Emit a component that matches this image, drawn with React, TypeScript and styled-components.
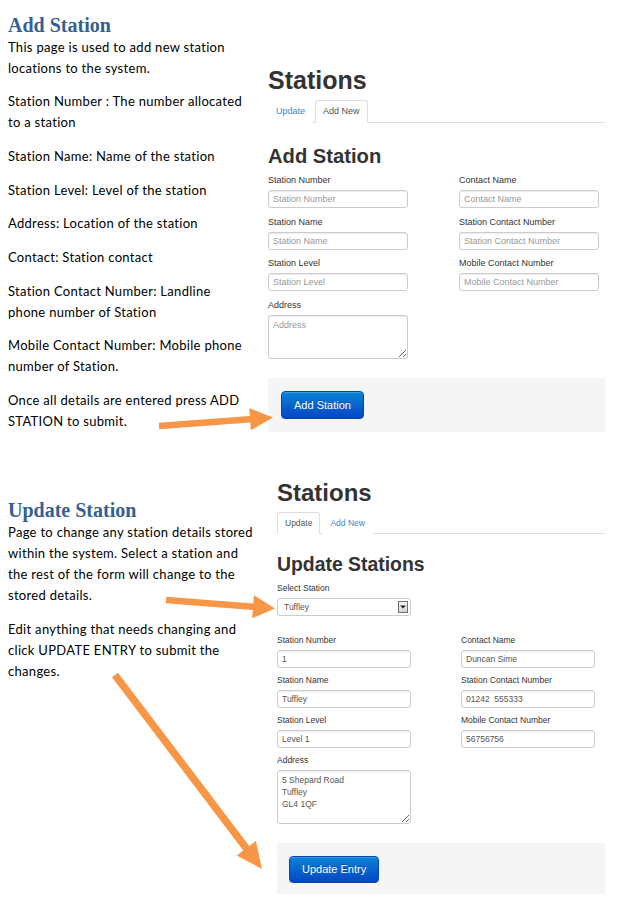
import React from 'react';
import styled, { createGlobalStyle } from 'styled-components';

const GlobalStyle = createGlobalStyle`
  html, body { margin: 0; padding: 0; background: #ffffff; }
  body { font-family: 'Lato', 'Liberation Sans', sans-serif; }
  * { box-sizing: border-box; }
`;

type Shot = {
  leftW: number;
  width: number;
  padTop: number;
  h1: number;
  h1Lh: number;
  tabsMt: number;
  tabH: number;
  tabFs: number;
  h2: number;
  h2Lh: number;
  h2Mt: number;
  h2Mb: number;
  fs: number;
  lblLh: number;
  lblGap: number;
  inH: number;
  inW: number;
  colW: number;
  rowGap: number;
  taH: number;
  actMt: number;
  actPadT: number;
  actPadB: number;
  actPadL: number;
  btnH: number;
  btnPadX: number;
};

const shotA: Shot = {
  leftW: 268,
  width: 337,
  padTop: 66.6,
  h1: 25,
  h1Lh: 27.5,
  tabsMt: 5.9,
  tabH: 23,
  tabFs: 9,
  h2: 20.2,
  h2Lh: 22,
  h2Mt: 22,
  h2Mb: 8.5,
  fs: 9,
  lblLh: 11,
  lblGap: 4,
  inH: 18,
  inW: 140,
  colW: 191,
  rowGap: 8.5,
  taH: 44,
  actMt: 19,
  actPadT: 13,
  actPadB: 13,
  actPadL: 13,
  btnH: 28,
  btnPadX: 12,
};

const shotB: Shot = {
  leftW: 277,
  width: 328,
  padTop: 20.6,
  h1: 24,
  h1Lh: 26.4,
  tabsMt: 5,
  tabH: 22,
  tabFs: 8.5,
  h2: 19.4,
  h2Lh: 22,
  h2Mt: 19,
  h2Mb: 8.5,
  fs: 8.5,
  lblLh: 11,
  lblGap: 4,
  inH: 18,
  inW: 134,
  colW: 184,
  rowGap: 7,
  taH: 54,
  actMt: 18.5,
  actPadT: 13,
  actPadB: 11,
  actPadL: 12,
  btnH: 27,
  btnPadX: 12,
};

const Page = styled.div`
  position: relative;
  width: 621px;
  min-height: 911px;
  overflow: hidden;
`;

const Section = styled.section<{ $leftW: number; $mt: number }>`
  display: grid;
  grid-template-columns: ${(p) => p.$leftW}px 1fr;
  align-items: start;
  margin-top: ${(p) => p.$mt}px;
`;

const TextCol = styled.div<{ $pt: number }>`
  padding: ${(p) => p.$pt}px 0 0 8px;
  color: #000000;
  font-family: 'Lato', 'Liberation Sans', sans-serif;
  font-size: 13px;
  letter-spacing: 0.3px;
`;

const DocHeading = styled.h2<{ $mb: number }>`
  margin: 0 0 ${(p) => p.$mb}px;
  font-family: 'Liberation Serif', 'Times New Roman', serif;
  font-weight: 700;
  font-size: 20px;
  line-height: 24px;
  letter-spacing: 0;
  color: #365f91;
`;

const Para = styled.p`
  margin: 0 0 12.7px;
  line-height: 21px;
  white-space: nowrap;
  &:last-child { margin-bottom: 0; }
`;

const Panel = styled.div<{ $c: Shot }>`
  width: ${(p) => p.$c.width}px;
  padding-top: ${(p) => p.$c.padTop}px;
  font-family: 'Liberation Sans', Arial, Helvetica, sans-serif;
  color: #333333;
`;

const Title = styled.h1<{ $c: Shot }>`
  margin: 0;
  font-size: ${(p) => p.$c.h1}px;
  line-height: ${(p) => p.$c.h1Lh}px;
  font-weight: 700;
  color: #333333;
`;

const Tabs = styled.div<{ $c: Shot }>`
  display: flex;
  margin-top: ${(p) => p.$c.tabsMt}px;
  border-bottom: 1px solid #dddddd;
`;

const Tab = styled.span<{ $c: Shot; $active?: boolean }>`
  height: ${(p) => p.$c.tabH}px;
  line-height: ${(p) => p.$c.tabH - 2}px;
  padding: 0 7px;
  margin: 0 2px -1px 0;
  border: 1px solid ${(p) => (p.$active ? '#dddddd' : 'transparent')};
  border-bottom-color: transparent;
  border-radius: 3px 3px 0 0;
  background: #ffffff;
  font-size: ${(p) => p.$c.tabFs}px;
  color: ${(p) => (p.$active ? '#555555' : '#3a87cf')};
`;

const FormTitle = styled.h2<{ $c: Shot }>`
  margin: ${(p) => p.$c.h2Mt}px 0 ${(p) => p.$c.h2Mb}px;
  font-size: ${(p) => p.$c.h2}px;
  line-height: ${(p) => p.$c.h2Lh}px;
  font-weight: 700;
  color: #333333;
`;

const FormGrid = styled.div<{ $c: Shot }>`
  display: grid;
  grid-template-columns: ${(p) => p.$c.colW}px 1fr;
  row-gap: ${(p) => p.$c.rowGap}px;
`;

const Group = styled.div<{ $mb?: number }>`
  display: flex;
  flex-direction: column;
  align-items: flex-start;
  margin-bottom: ${(p) => p.$mb ?? 0}px;
`;

const Label = styled.label<{ $c: Shot }>`
  display: block;
  font-size: ${(p) => p.$c.fs}px;
  line-height: ${(p) => p.$c.lblLh}px;
  margin-bottom: ${(p) => p.$c.lblGap}px;
  color: #333333;
`;

const Input = styled.input<{ $c: Shot }>`
  display: block;
  width: ${(p) => p.$c.inW}px;
  height: ${(p) => p.$c.inH}px;
  margin: 0;
  padding: 0 4px;
  border: 1px solid #cccccc;
  border-radius: 3px;
  box-shadow: inset 0 1px 1px rgba(0, 0, 0, 0.075);
  background: #ffffff;
  font-family: 'Liberation Sans', Arial, sans-serif;
  font-size: ${(p) => p.$c.fs}px;
  color: #555555;
  outline: none;
  &::placeholder { color: #999999; opacity: 1; }
`;

const TextArea = styled.textarea<{ $c: Shot }>`
  display: block;
  width: ${(p) => p.$c.inW}px;
  height: ${(p) => p.$c.taH}px;
  margin: 0;
  padding: 3px 4px;
  border: 1px solid #cccccc;
  border-radius: 3px;
  box-shadow: inset 0 1px 1px rgba(0, 0, 0, 0.075);
  background: #ffffff;
  font-family: 'Liberation Sans', Arial, sans-serif;
  font-size: ${(p) => p.$c.fs}px;
  line-height: 12px;
  color: #555555;
  resize: vertical;
  outline: none;
  &::placeholder { color: #999999; opacity: 1; }
`;

const SelectBox = styled.div<{ $c: Shot }>`
  display: flex;
  align-items: center;
  justify-content: space-between;
  width: ${(p) => p.$c.inW}px;
  height: ${(p) => p.$c.inH}px;
  padding: 0 2px 0 6px;
  border: 1px solid #cccccc;
  border-radius: 3px;
  background: #ffffff;
  font-size: ${(p) => p.$c.fs}px;
  color: #555555;
`;

const DropButton = styled.span`
  display: flex;
  align-items: center;
  justify-content: center;
  width: 10px;
  height: 12px;
  border: 1px solid #707070;
  background: linear-gradient(#f4f4f4, #d6d6d6);
`;

const Actions = styled.div<{ $c: Shot }>`
  margin-top: ${(p) => p.$c.actMt}px;
  padding: ${(p) => p.$c.actPadT}px 0 ${(p) => p.$c.actPadB}px ${(p) => p.$c.actPadL}px;
  background: #f5f5f5;
`;

const PrimaryButton = styled.button<{ $c: Shot }>`
  display: block;
  height: ${(p) => p.$c.btnH}px;
  padding: 0 ${(p) => p.$c.btnPadX}px;
  border: 1px solid #0645b0;
  border-radius: 4px;
  background: linear-gradient(to bottom, #0a84d6, #0446c4);
  color: #ffffff;
  font-family: 'Liberation Sans', Arial, sans-serif;
  font-size: 11px;
  text-shadow: 0 -1px 0 rgba(0, 0, 0, 0.25);
  box-shadow: inset 0 1px 0 rgba(255, 255, 255, 0.2);
`;

const Overlay = styled.svg`
  position: absolute;
  top: 0;
  left: 0;
  pointer-events: none;
`;

type Arrow = { x1: number; y1: number; x2: number; y2: number; shaft: number; headLen: number; headW: number };

const arrows: Arrow[] = [
  { x1: 159, y1: 426, x2: 273, y2: 417.5, shaft: 6.5, headLen: 23, headW: 22 },
  { x1: 166, y1: 600, x2: 275, y2: 608.5, shaft: 6.5, headLen: 22, headW: 23 },
  { x1: 115, y1: 675, x2: 262, y2: 869, shaft: 7.5, headLen: 26, headW: 24 },
];

function arrowPoints(a: Arrow): string {
  const dx = a.x2 - a.x1;
  const dy = a.y2 - a.y1;
  const len = Math.hypot(dx, dy);
  const ux = dx / len;
  const uy = dy / len;
  const px = -uy;
  const py = ux;
  const bx = a.x2 - ux * a.headLen;
  const by = a.y2 - uy * a.headLen;
  const s = a.shaft / 2;
  const h = a.headW / 2;
  const pts: [number, number][] = [
    [a.x1 + px * s, a.y1 + py * s],
    [bx + px * s, by + py * s],
    [bx + px * h, by + py * h],
    [a.x2, a.y2],
    [bx - px * h, by - py * h],
    [bx - px * s, by - py * s],
    [a.x1 - px * s, a.y1 - py * s],
  ];
  return pts.map(([x, y]) => `${x.toFixed(1)},${y.toFixed(1)}`).join(' ');
}

const Field: React.FC<{ c: Shot; label: string; placeholder?: string; value?: string }> = ({ c, label, placeholder, value }) => (
  <Group>
    <Label $c={c}>{label}</Label>
    {value !== undefined ? (
      <Input $c={c} defaultValue={value} readOnly />
    ) : (
      <Input $c={c} placeholder={placeholder} readOnly />
    )}
  </Group>
);

const AreaField: React.FC<{ c: Shot; label: string; placeholder?: string; value?: string }> = ({ c, label, placeholder, value }) => (
  <Group>
    <Label $c={c}>{label}</Label>
    {value !== undefined ? (
      <TextArea $c={c} defaultValue={value} readOnly />
    ) : (
      <TextArea $c={c} placeholder={placeholder} readOnly />
    )}
  </Group>
);

export default function App() {
  const a = shotA;
  const b = shotB;
  return (
    <Page>
      <GlobalStyle />
      <Section $leftW={a.leftW} $mt={0}>
        <TextCol $pt={13.25}>
          <DocHeading $mb={-0.75}>Add Station</DocHeading>
          <Para>This page is used to add new station<br />locations to the system.</Para>
          <Para>Station Number : The number allocated<br />to a station</Para>
          <Para>Station Name: Name of the station</Para>
          <Para>Station Level: Level of the station</Para>
          <Para>Address: Location of the station</Para>
          <Para>Contact: Station contact</Para>
          <Para>Station Contact Number: Landline<br />phone number of Station</Para>
          <Para>Mobile Contact Number: Mobile phone<br />number of Station.</Para>
          <Para>Once all details are entered press ADD<br />STATION to submit.</Para>
        </TextCol>
        <Panel $c={a}>
          <Title $c={a}>Stations</Title>
          <Tabs $c={a}>
            <Tab $c={a}>Update</Tab>
            <Tab $c={a} $active>Add New</Tab>
          </Tabs>
          <FormTitle $c={a}>Add Station</FormTitle>
          <FormGrid $c={a}>
            <Field c={a} label="Station Number" placeholder="Station Number" />
            <Field c={a} label="Contact Name" placeholder="Contact Name" />
            <Field c={a} label="Station Name" placeholder="Station Name" />
            <Field c={a} label="Station Contact Number" placeholder="Station Contact Number" />
            <Field c={a} label="Station Level" placeholder="Station Level" />
            <Field c={a} label="Mobile Contact Number" placeholder="Mobile Contact Number" />
            <AreaField c={a} label="Address" placeholder="Address" />
          </FormGrid>
          <Actions $c={a}>
            <PrimaryButton $c={a} type="button">Add Station</PrimaryButton>
          </Actions>
        </Panel>
      </Section>

      <Section $leftW={b.leftW} $mt={27.9}>
        <TextCol $pt={38.25}>
          <DocHeading $mb={0}>Update Station</DocHeading>
          <Para>
            Page to change any station details stored<br />within the system. Select a station and<br />the rest of the form will change to the<br />stored details.
          </Para>
          <Para>
            Edit anything that needs changing and<br />click UPDATE ENTRY to submit the<br />changes.
          </Para>
        </TextCol>
        <Panel $c={b}>
          <Title $c={b}>Stations</Title>
          <Tabs $c={b}>
            <Tab $c={b} $active>Update</Tab>
            <Tab $c={b}>Add New</Tab>
          </Tabs>
          <FormTitle $c={b}>Update Stations</FormTitle>
          <Group $mb={19}>
            <Label $c={b}>Select Station</Label>
            <SelectBox $c={b}>
              <span>Tuffley</span>
              <DropButton>
                <svg width="6" height="4" viewBox="0 0 6 4">
                  <path d="M0 0.5 L6 0.5 L3 3.5 Z" fill="#222" />
                </svg>
              </DropButton>
            </SelectBox>
          </Group>
          <FormGrid $c={b}>
            <Field c={b} label="Station Number" value="1" />
            <Field c={b} label="Contact Name" value="Duncan Sime" />
            <Field c={b} label="Station Name" value="Tuffley" />
            <Field c={b} label="Station Contact Number" value="01242  555333" />
            <Field c={b} label="Station Level" value="Level 1" />
            <Field c={b} label="Mobile Contact Number" value="56756756" />
            <AreaField c={b} label="Address" value={'5 Shepard Road\nTuffley\nGL4 1QF'} />
          </FormGrid>
          <Actions $c={b}>
            <PrimaryButton $c={b} type="button">Update Entry</PrimaryButton>
          </Actions>
        </Panel>
      </Section>

      <Overlay width="621" height="911" viewBox="0 0 621 911">
        {arrows.map((ar, i) => (
          <polygon key={i} points={arrowPoints(ar)} fill="#f79646" />
        ))}
      </Overlay>
    </Page>
  );
}
